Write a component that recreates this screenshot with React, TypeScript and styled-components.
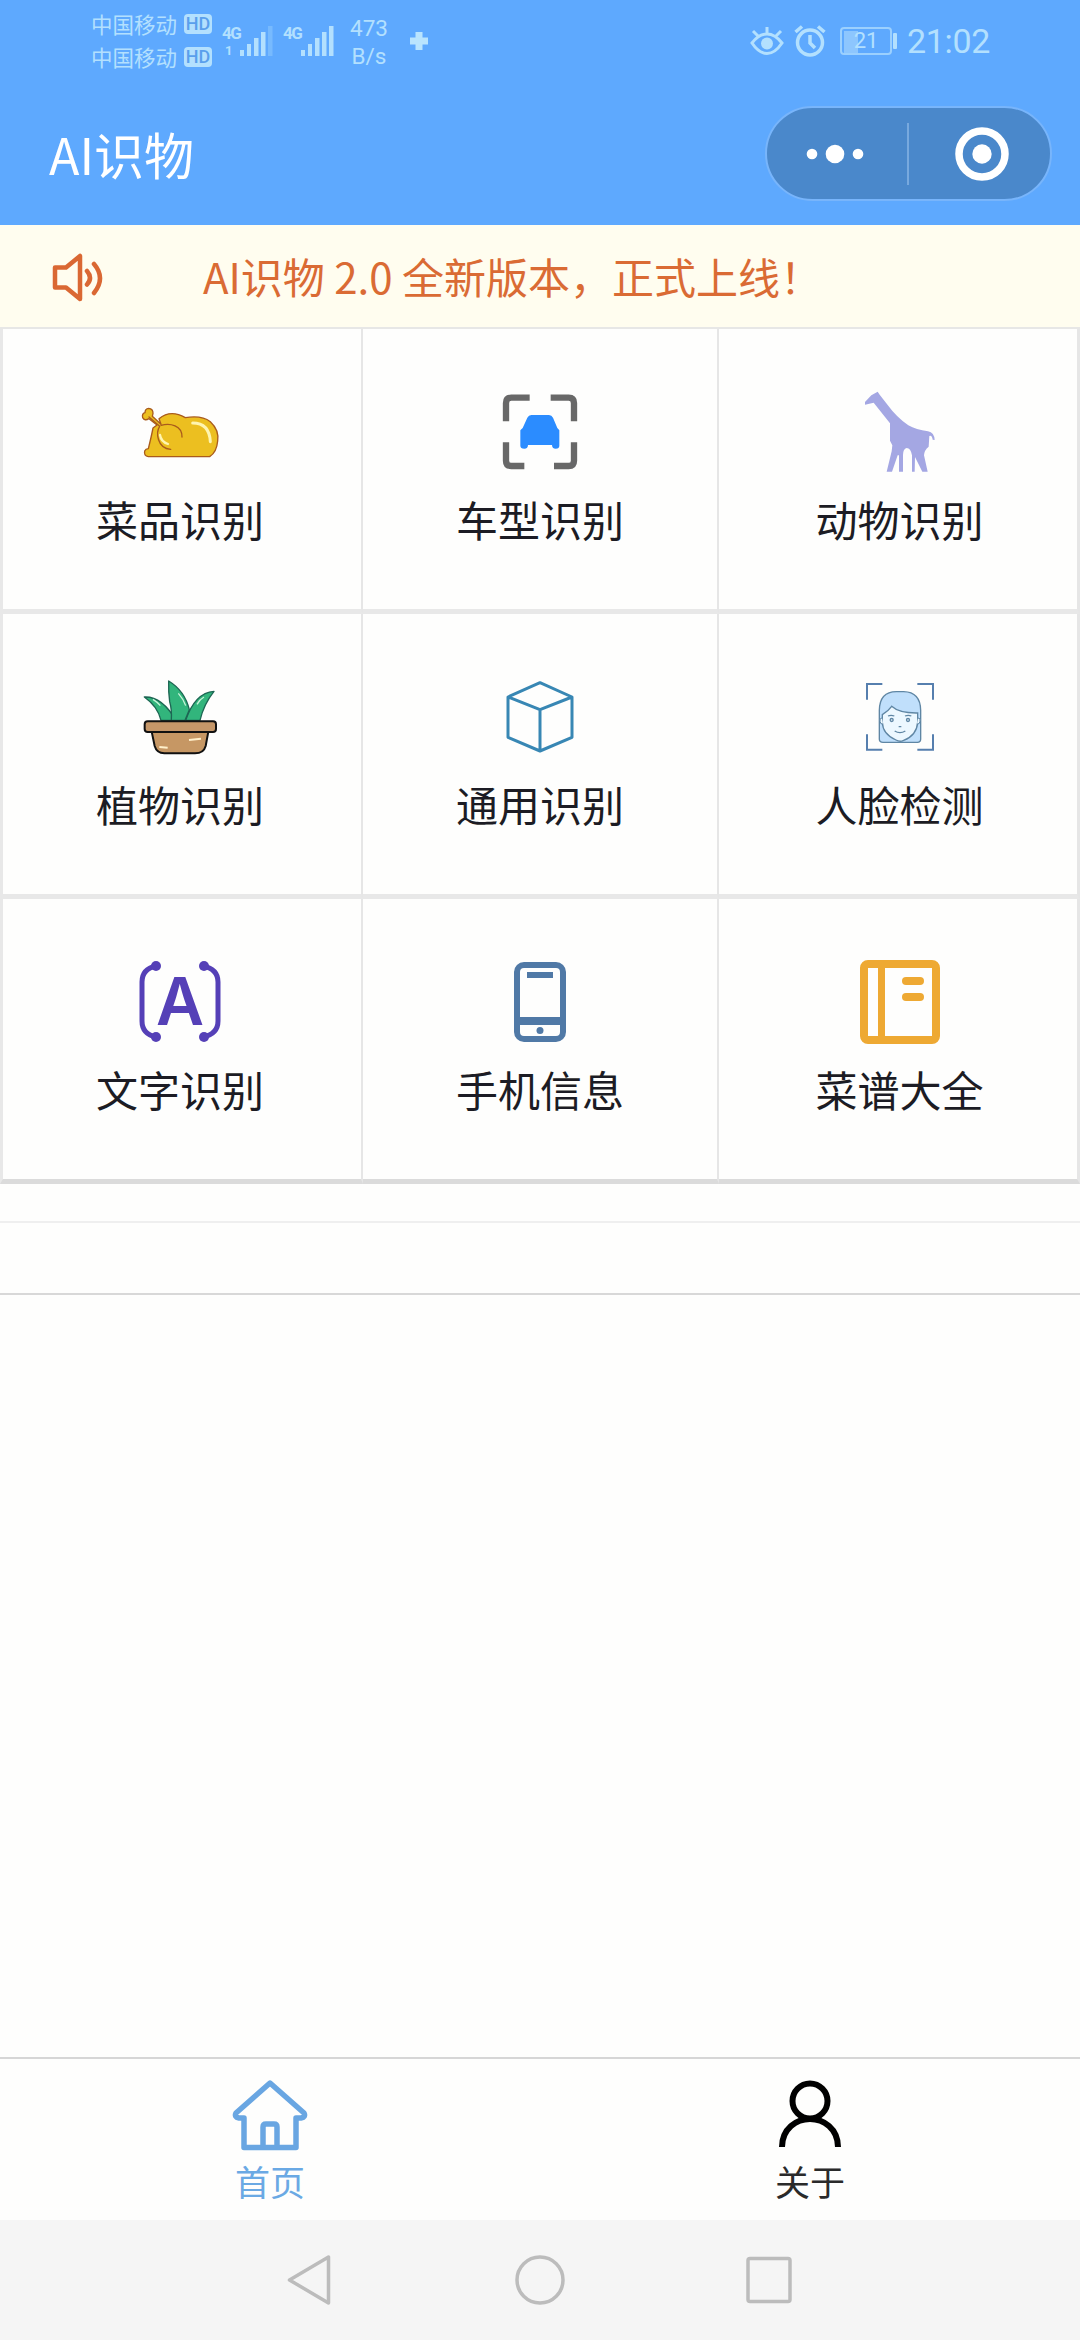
import React from "react";
import styled, { createGlobalStyle } from "styled-components";

const GlobalStyle = createGlobalStyle`
  * { box-sizing: border-box; }
  body {
    margin: 0;
    background: #fefefd;
    font-family: "Noto Sans CJK SC", "Noto Sans", sans-serif;
  }
  svg { display: block; flex: none; }
`;

const Screen = styled.div`
  width: 1080px;
  height: 2340px;
  display: flex;
  flex-direction: column;
  overflow: hidden;
  background: #fefefd;
`;

const Header = styled.header`
  height: 225px;
  background: #5ea9fe;
  color: #fff;
`;

const StatusBar = styled.div`
  height: 82px;
  padding: 0 89px 0 91px;
  display: flex;
  justify-content: space-between;
  color: #b3e0fe;
`;

const StatusGroup = styled.div`
  display: flex;
  align-items: center;
`;

const Carriers = styled.div`
  display: flex;
  flex-direction: column;
  gap: 1px;
  width: 122px;
  padding-bottom: 2px;
`;

const Carrier = styled.div`
  height: 32px;
  display: flex;
  align-items: center;
  gap: 7px;
  font-size: 21.5px;
  line-height: 32px;
  white-space: nowrap;
`;

const HdBadge = styled.span`
  width: 28px;
  height: 20px;
  border-radius: 4px;
  background: #b3e0fe;
  color: #5a9fec;
  font: 500 18px/20px Roboto, sans-serif;
  text-align: center;
`;

const Signal = styled.div<{ $gap: number }>`
  display: flex;
  margin-left: ${(p) => p.$gap}px;
`;

const SignalLabel = styled.div`
  width: 18px;
  height: 32px;
  display: flex;
  flex-direction: column;
  gap: 3px;
  font: 700 17px/17px "Roboto", sans-serif;
  letter-spacing: -1.6px;
`;

const SignalIndex = styled.span`
  padding-left: 3px;
  font-size: 13px;
  line-height: 12px;
`;

const Speed = styled.div`
  width: 42px;
  margin-left: 13px;
  padding-top: 2px;
  font: 400 22.5px/28px Roboto, sans-serif;
  text-align: center;
`;

const Plus = styled.div`
  margin-left: 19px;
`;

const Battery = styled.div`
  width: 52px;
  height: 28px;
  margin-left: 14px;
  border: 2px solid #9bd0fe;
  border-radius: 4px;
  background: linear-gradient(90deg, #8dc6fe 0 14px, transparent 14px) 2px 2px no-repeat;
  font: 400 22px/24px Roboto, sans-serif;
  text-align: center;
`;

const BatteryCap = styled.span`
  width: 4px;
  height: 16px;
  margin-left: 1px;
  border-radius: 1px;
  background: #b3e0fe;
`;

const Clock = styled.span`
  width: 84px;
  margin-left: 10px;
  font: 400 34px/40px Roboto, sans-serif;
  letter-spacing: -0.3px;
`;

const TitleBar = styled.div`
  height: 143px;
  padding: 24px 28px 0 49px;
  display: flex;
  justify-content: space-between;
`;

const Title = styled.h1`
  margin: 0;
  height: 94px;
  font-size: 50px;
  font-weight: 400;
  line-height: 94px;
`;

const Capsule = styled.div`
  width: 287px;
  height: 95px;
  border: 2px solid #78b5fb;
  border-radius: 48px;
  background: #4a88cb;
  display: flex;
  align-items: center;
`;

const CapsuleButton = styled.button<{ $width: number; $pad: number }>`
  width: ${(p) => p.$width}px;
  height: 60px;
  padding: 0 0 0 ${(p) => p.$pad}px;
  border: 0;
  background: none;
  display: flex;
  align-items: center;
`;

const CapsuleDivider = styled.span`
  width: 2px;
  height: 62px;
  background: #78a9de;
`;

const Notice = styled.div`
  height: 102px;
  padding-left: 51px;
  display: flex;
  align-items: center;
  gap: 100px;
  background: #fffdef;
  color: #da6b34;
  font-size: 42px;
  line-height: 60px;
  white-space: pre;
`;

const NoticeIcon = styled.div`
  padding-top: 4px;
`;

const Grid = styled.main`
  display: grid;
  grid-template-columns: 363px 356px 361px;
  grid-auto-rows: 285px;
  border-top: 2px solid #e7e7e6;
`;

const Cell = styled.div`
  border-right: 2px solid #e6e6e6;
  border-bottom: 5px solid #e8e8e8;
  padding-top: 61px;
  display: flex;
  flex-direction: column;
  align-items: center;
  gap: 15px;
  background: #fefefd;

  &:nth-child(3n + 1) {
    border-left: 3px solid #e8e8e8;
    padding-right: 4px;
  }
  &:nth-child(3n) {
    border-right-width: 3px;
    padding-left: 3px;
  }
  &:nth-child(n + 7) {
    border-bottom-color: #dbdbdb;
  }
`;

const CellLabel = styled.span`
  height: 60px;
  font-size: 42px;
  line-height: 60px;
  color: #1c1c24;
  white-space: nowrap;
`;

const Strip = styled.div<{ $height: number; $line: string; $weight: number }>`
  height: ${(p) => p.$height}px;
  border-bottom: ${(p) => p.$weight}px solid ${(p) => p.$line};
`;

const Blank = styled.div`
  flex: 1;
`;

const TabBar = styled.nav`
  height: 163px;
  border-top: 2px solid #d6d6d6;
  display: grid;
  grid-template-columns: 1fr 1fr;
`;

const Tab = styled.div<{ $active?: boolean }>`
  padding-top: 20px;
  display: flex;
  flex-direction: column;
  align-items: center;
  gap: 4px;
  font-size: 35px;
  line-height: 48px;
  color: ${(p) => (p.$active ? "#6aa9e4" : "#2a2a2a")};
`;

const SystemNav = styled.div`
  height: 120px;
  background: #f5f5f5;
  padding: 0 285px;
  display: flex;
  align-items: center;
  justify-content: space-between;
`;

const SignalBars = ({ faded }: { faded?: boolean }) => (
  <svg width="34" height="32" viewBox="0 0 34 32" fill="#b3e0fe">
    <rect x="0" y="25" width="4" height="6" />
    <rect x="7" y="19" width="4" height="12" />
    <rect x="14" y="13" width="4.5" height="18" />
    <rect x="21" y="7" width="4.5" height="24" />
    <rect x="28" y="1" width="4.5" height="30" opacity={faded ? 0.3 : 1} />
  </svg>
);

const Chicken = () => (
  <svg width="84" height="84" viewBox="174 60 252 252" strokeLinecap="round" strokeLinejoin="round">
    <path
      d="M205 260Q191 258 194 243Q197 236 205 236Q214 200 219 174L231 165L207 146Q194 154 188 143Q185 131 195 128Q195 116 206 115Q219 116 219 130L217 139L243 163L237 146Q272 117 316 143Q365 135 391 155Q418 180 413 213Q410 247 389 260Z"
      fill="#ecbf20"
      stroke="#a95b1c"
      strokeWidth="4"
    />
    <path d="M243 166C270 158 307 166 306 201" fill="none" stroke="#a95b1c" strokeWidth="4" />
    <path d="M207 141L239 169C227 187 231 235 272 238" fill="none" stroke="#a95b1c" strokeWidth="4" />
    <path d="M240 195Q243 215 264 222" fill="none" stroke="#fff5b0" strokeWidth="7" />
    <path d="M338 159Q388 159 391 215" fill="none" stroke="#fff5b0" strokeWidth="9" />
  </svg>
);

const CarScan = () => (
  <svg width="84" height="84" viewBox="174 60 252 252">
    <path
      d="M269 83H214Q198 83 198 99V154M332 83H386Q402 83 402 99V154M198 217V272Q198 288 214 288H253M402 217V272Q402 288 386 288H342"
      fill="none"
      stroke="#686868"
      strokeWidth="19"
    />
    <path
      d="M274 135H327Q335 135 339 143L352 174L358 181V227Q358 236 347 236Q336 236 336 225H264Q264 236 253 236Q241 236 241 227V181L248 174L262 143Q266 135 274 135Z"
      fill="#2b8cff"
    />
  </svg>
);

const Giraffe = () => (
  <svg width="84" height="84" viewBox="174 60 252 252">
    <path
      d="M195 96L214 76L233 65L239 74L263 105Q290 142 325 166Q348 179 384 184Q403 188 404 210L398 209Q396 195 388 198L386 230Q373 240 372 256L383 305H367L345 261L344 305H336V256Q332 234 320 234Q309 237 309 255V305H297V256H293L276 305H260L275 244L277 226L270 212V160L221 98L195 104Z"
      fill="#a4a7e3"
    />
  </svg>
);

const Plant = () => (
  <svg width="84" height="84" viewBox="174 45 252 252" strokeLinejoin="round">
    <g fill="#32b57c" stroke="#1d6653" strokeWidth="4">
      <path d="M193 111Q245 108 288 181H243Q233 139 193 111Z" />
      <path d="M317 181Q345 98 402 94Q371 133 360 181Z" />
      <path d="M266 63Q314 92 328 149L315 181H274Q276 149 269 125Q265 95 266 63Z" />
    </g>
    <path d="M219 118Q233 127 241 137M295 100Q311 118 317 137M351 133Q359 118 372 111" fill="none" stroke="#c7f3d8" strokeWidth="4" />
    <path d="M215 215H385L377 258Q371 280 345 280H253Q230 279 224 258Z" fill="#c69764" stroke="#111" strokeWidth="6" />
    <rect x="194" y="184" width="214" height="32" rx="9" fill="#c59769" stroke="#111" strokeWidth="6" />
    <path d="M327 240L363 236M238 261L263 263" stroke="#fff0cb" strokeWidth="6" />
  </svg>
);

const Cube = () => (
  <svg width="84" height="84" viewBox="174 45 252 252">
    <path
      d="M300 68L396 111V232L300 273L204 232V111ZM204 111L300 149L396 111M300 149V273"
      fill="none"
      stroke="#3887b4"
      strokeWidth="9"
      strokeLinejoin="round"
    />
  </svg>
);

const FaceScan = () => (
  <svg width="84" height="84" viewBox="174 45 252 252" fill="none">
    <path d="M247 72H201V119M352 72H399V119M201 223V269H247M399 223V269H352" stroke="#567fae" strokeWidth="6" />
    <path d="M238 238V151Q239 95 289 95H311Q361 96 362 151V238Q362 247 352 247H249Q238 247 238 238Z" fill="#c0dffb" stroke="#5f86a4" strokeWidth="4" />
    <path d="M247 164Q264 154 275 139Q298 160 353 159V187Q350 226 311 241Q300 247 288 240Q248 223 247 187Z" fill="#edf8ff" stroke="#5f86a4" strokeWidth="4" />
    <path d="M246 174Q238 174 240 184Q241 194 249 192M354 174Q363 174 360 184Q359 194 351 192" fill="#edf8ff" stroke="#5f86a4" strokeWidth="3" />
    <path d="M264 168Q273 164 283 168M315 168Q325 164 334 168M284 213Q300 223 316 213M296 200H304" stroke="#5f86a4" strokeWidth="4" />
    <circle cx="275" cy="180" r="4.5" stroke="#5f86a4" strokeWidth="4" />
    <circle cx="324" cy="180" r="4.5" stroke="#5f86a4" strokeWidth="4" />
  </svg>
);

const TextScan = () => (
  <svg width="84" height="84" viewBox="0 0 84 84" fill="#5540b7">
    <path
      d="M18 6Q4 9 4 22V61Q4 74 18 77M65 6Q80 9 80 22V61Q80 74 65 77"
      fill="none"
      stroke="#5540b7"
      strokeWidth="5"
    />
    <circle cx="18" cy="6" r="5" />
    <circle cx="66" cy="6" r="5" />
    <circle cx="18" cy="77" r="5" />
    <circle cx="66" cy="77" r="5" />
    <text x="42" y="65" textAnchor="middle" fontFamily="Inter, sans-serif" fontWeight="600" fontSize="66">
      A
    </text>
  </svg>
);

const Phone = () => (
  <svg width="84" height="84" viewBox="0 0 84 84" fill="#5079a6">
    <rect x="19" y="5" width="46" height="74" rx="7" fill="none" stroke="#5079a6" strokeWidth="6" />
    <rect x="29" y="12" width="26" height="6" />
    <rect x="19" y="57" width="46" height="8" />
    <circle cx="42" cy="70.5" r="3.5" />
  </svg>
);

const Book = () => (
  <svg width="84" height="84" viewBox="0 0 84 84" fill="#eea933">
    <rect x="6" y="4" width="72" height="76" rx="4" fill="none" stroke="#eea933" strokeWidth="8" />
    <rect x="20" y="4" width="7" height="76" />
    <rect x="44" y="17" width="22" height="8" rx="4" />
    <rect x="44" y="33" width="22" height="8" rx="4" />
  </svg>
);

const features = [
  { label: "菜品识别", Icon: Chicken },
  { label: "车型识别", Icon: CarScan },
  { label: "动物识别", Icon: Giraffe },
  { label: "植物识别", Icon: Plant },
  { label: "通用识别", Icon: Cube },
  { label: "人脸检测", Icon: FaceScan },
  { label: "文字识别", Icon: TextScan },
  { label: "手机信息", Icon: Phone },
  { label: "菜谱大全", Icon: Book },
];

export default function App() {
  return (
    <Screen>
      <GlobalStyle />
      <Header>
        <StatusBar>
          <StatusGroup>
            <Carriers>
              <Carrier>中国移动<HdBadge>HD</HdBadge></Carrier>
              <Carrier>中国移动<HdBadge>HD</HdBadge></Carrier>
            </Carriers>
            <Signal $gap={9}>
              <SignalLabel>4G<SignalIndex>1</SignalIndex></SignalLabel>
              <SignalBars faded />
            </Signal>
            <Signal $gap={9}>
              <SignalLabel>4G</SignalLabel>
              <SignalBars />
            </Signal>
            <Speed>473<br />B/s</Speed>
            <Plus>
              <svg width="20" height="20" viewBox="0 0 20 20">
                <path d="M10 1V19M1 10H19" stroke="#b9e4fe" strokeWidth="7" />
              </svg>
            </Plus>
          </StatusGroup>
          <StatusGroup>
            <svg width="34" height="30" viewBox="0 0 34 30" fill="none" stroke="#b3e0fe" strokeWidth="3">
              <path d="M2 17Q9 8 17 8Q25 8 32 17Q25 27.500 17 27.500Q9 27.500 2 17ZM17 8V1M8 10L3 5M26 10L31 5" />
              <circle cx="17" cy="17.500" r="6" fill="#b3e0fe" stroke="none" />
            </svg>
            <svg width="42" height="32" viewBox="-10 0 42 32" fill="none" stroke="#b3e0fe" strokeWidth="3.500">
              <circle cx="16" cy="17.500" r="12.500" />
              <path d="M16 10V18L21 23M1.500 7L8 1.500M30.500 7L24 1.500" />
            </svg>
            <Battery>21</Battery>
            <BatteryCap />
            <Clock>21:02</Clock>
          </StatusGroup>
        </StatusBar>
        <TitleBar>
          <Title>AI识物</Title>
          <Capsule>
            <CapsuleButton $width={140} $pad={39} aria-label="更多">
              <svg width="58" height="20" viewBox="0 0 58 20" fill="#fff">
                <circle cx="6" cy="10" r="5.300" />
                <circle cx="29" cy="10" r="9.300" />
                <circle cx="52" cy="10" r="5.300" />
              </svg>
            </CapsuleButton>
            <CapsuleDivider />
            <CapsuleButton $width={139} $pad={46} aria-label="关闭">
              <svg width="54" height="54" viewBox="0 0 54 54">
                <circle cx="27" cy="27" r="23" fill="none" stroke="#fff" strokeWidth="7.500" />
                <circle cx="27" cy="27" r="9.700" fill="#fff" />
              </svg>
            </CapsuleButton>
          </Capsule>
        </TitleBar>
      </Header>

      <Notice>
        <NoticeIcon>
          <svg width="52" height="50" viewBox="0 0 52 50" fill="none" stroke="#da6833" strokeWidth="4.500" strokeLinejoin="round" strokeLinecap="round">
            <path d="M4 14.500H15L29 3V46L15 34.500H4Z" />
            <path d="M36 18Q42 25 36 31.500M43 11Q55 25 43 40" />
          </svg>
        </NoticeIcon>
        AI识物 2.0 全新版本，正式上线！
      </Notice>

      <Grid>
        {features.map(({ label, Icon }) => (
          <Cell key={label}>
            <Icon />
            <CellLabel>{label}</CellLabel>
          </Cell>
        ))}
      </Grid>

      <Strip $height={39} $line="#efefef" $weight={2} />
      <Strip $height={72} $line="#d8d8d8" $weight={2} />
      <Blank />

      <TabBar>
        <Tab $active>
          <svg width="76" height="74" viewBox="0 0 76 74" fill="none" stroke="#69a6e2" strokeWidth="5.500" strokeLinejoin="round">
            <path d="M12 39H7Q2 38 4 34L38 4L72 34Q74 38 69 39H64V68.500H12Z" />
            <path d="M31 68V48Q31 45 34 45H42Q45 45 45 48V68" />
          </svg>
          首页
        </Tab>
        <Tab>
          <svg width="76" height="74" viewBox="0 0 76 74" fill="none" stroke="#000" strokeWidth="6">
            <circle cx="38" cy="22" r="17.500" />
            <path d="M10 68Q10 55 19 47Q27 40 38 40Q49 40 57 47Q66 55 66 68" />
          </svg>
          关于
        </Tab>
      </TabBar>
      <SystemNav>
        <svg width="50" height="52" viewBox="0 0 50 52" fill="none" stroke="#bcbcbc" strokeWidth="3.500" strokeLinejoin="round">
          <path d="M43.500 3V49L4.500 26Z" />
        </svg>
        <svg width="52" height="52" viewBox="0 0 52 52" fill="none" stroke="#bcbcbc" strokeWidth="3.500">
          <circle cx="26" cy="26" r="23" />
        </svg>
        <svg width="50" height="52" viewBox="0 0 50 52" fill="none" stroke="#bcbcbc" strokeWidth="3.500">
          <rect x="3" y="4.500" width="42" height="43" rx="2" />
        </svg>
      </SystemNav>
    </Screen>
  );
}
